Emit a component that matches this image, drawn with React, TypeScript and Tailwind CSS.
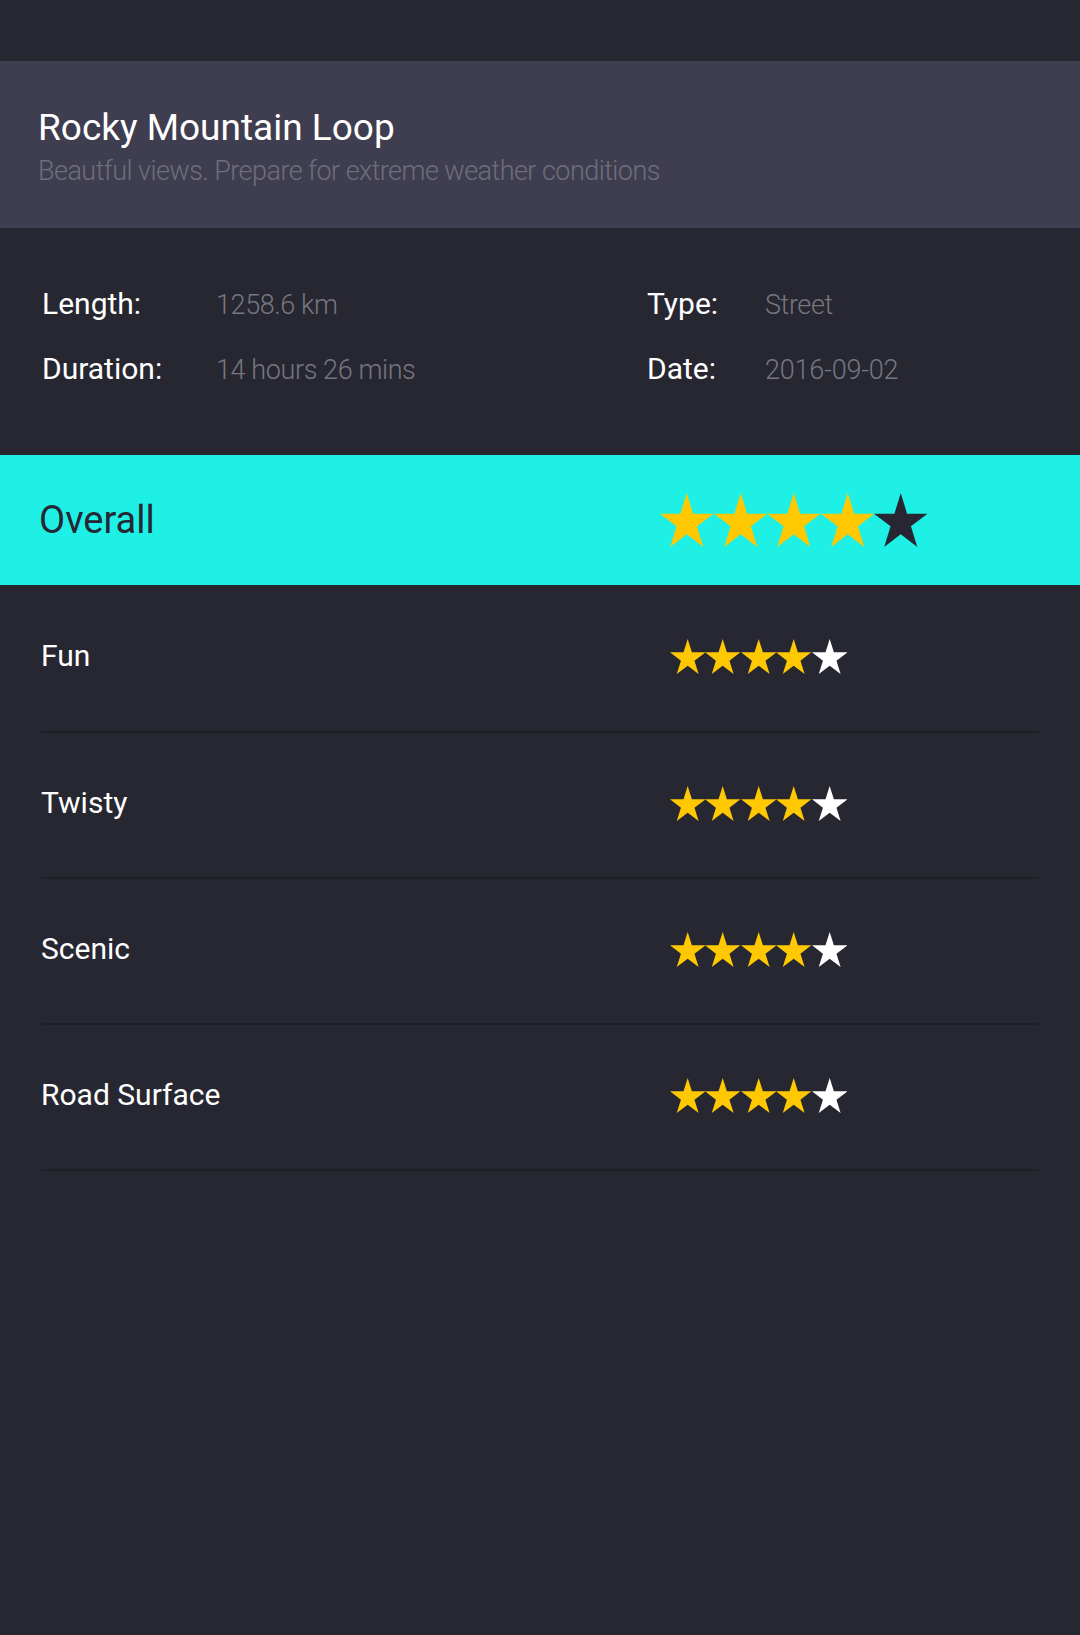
import React from 'react';

const font = { fontFamily: 'Roboto, "Noto Sans", sans-serif' };

const STAR = 'M50 0 L61.23 34.55 L97.55 34.55 L68.16 55.9 L79.39 90.45 L50 69.1 L20.61 90.45 L31.84 55.9 L2.45 34.55 L38.77 34.55 Z';

function Star({ className, filled, empty }: { className: string; filled: boolean; empty: string }) {
  return (
    <svg viewBox="2.45 0 95.1 90.45" preserveAspectRatio="none" className={className}>
      <path d={STAR} fill={filled ? '#ffc800' : empty} />
    </svg>
  );
}

function Stars({ value, big }: { value: number; big?: boolean }) {
  return (
    <div className="flex">
      {[1, 2, 3, 4, 5].map((i) => (
        <Star
          key={i}
          filled={i <= value}
          empty={big ? '#272733' : '#ffffff'}
          className={big ? 'h-[54px] w-[53.5px]' : 'h-[35px] w-[35.4px]'}
        />
      ))}
    </div>
  );
}

const ratings = [
  { name: 'Fun', value: 4 },
  { name: 'Twisty', value: 4 },
  { name: 'Scenic', value: 4 },
  { name: 'Road Surface', value: 4 },
];

export default function App() {
  return (
    <div className="min-h-[1635px] w-[1080px] bg-[#272731]" style={font}>
      <div className="h-[61px]" />

      <div className="bg-[#3f3e50] pl-[38px] pt-[48px] pb-[43px]">
        <h1 className="text-[37px] leading-none text-white">Rocky Mountain Loop</h1>
        <p className="mt-[12px] text-[27px] font-light leading-none tracking-[-0.55px] text-[#6e6e7a]">
          Beautful views. Prepare for extreme weather conditions
        </p>
      </div>

      <div className="flex flex-col gap-[35px] pl-[42px] pt-[61px] pb-[71px]">
        <div className="flex items-baseline">
          <div className="flex w-[605px] items-baseline">
            <span className="w-[174px] text-[30px] leading-none text-white">Length:</span>
            <span className="text-[27px] font-light leading-none tracking-[-0.4px] text-[#76767f]">1258.6 km</span>
          </div>
          <span className="w-[118px] text-[30px] leading-none text-white">Type:</span>
          <span className="text-[27px] font-light leading-none tracking-[-0.4px] text-[#76767f]">Street</span>
        </div>
        <div className="flex items-baseline">
          <div className="flex w-[605px] items-baseline">
            <span className="w-[174px] text-[30px] leading-none text-white">Duration:</span>
            <span className="text-[27px] font-light leading-none tracking-[-0.4px] text-[#76767f]">14 hours 26 mins</span>
          </div>
          <span className="w-[118px] text-[30px] leading-none text-white">Date:</span>
          <span className="text-[27px] font-light leading-none tracking-[-0.2px] text-[#76767f]">2016-09-02</span>
        </div>
      </div>

      <div className="flex h-[130px] items-center bg-[#1ef0e5] pl-[39px]">
        <span className="w-[621px] text-[38px] leading-none text-[#272733]">Overall</span>
        <Stars value={4} big />
      </div>

      <div className="mx-[41px]">
        {ratings.map((r, i) => (
          <div
            key={r.name}
            className={`flex items-center border-b-2 border-[#1f1f26] ${i === 0 ? 'h-[148px] pb-[4px]' : 'h-[146px] pb-[4px]'}`}
          >
            <span className="w-[629px] text-[30px] leading-none text-white">{r.name}</span>
            <Stars value={r.value} />
          </div>
        ))}
      </div>
    </div>
  );
}
